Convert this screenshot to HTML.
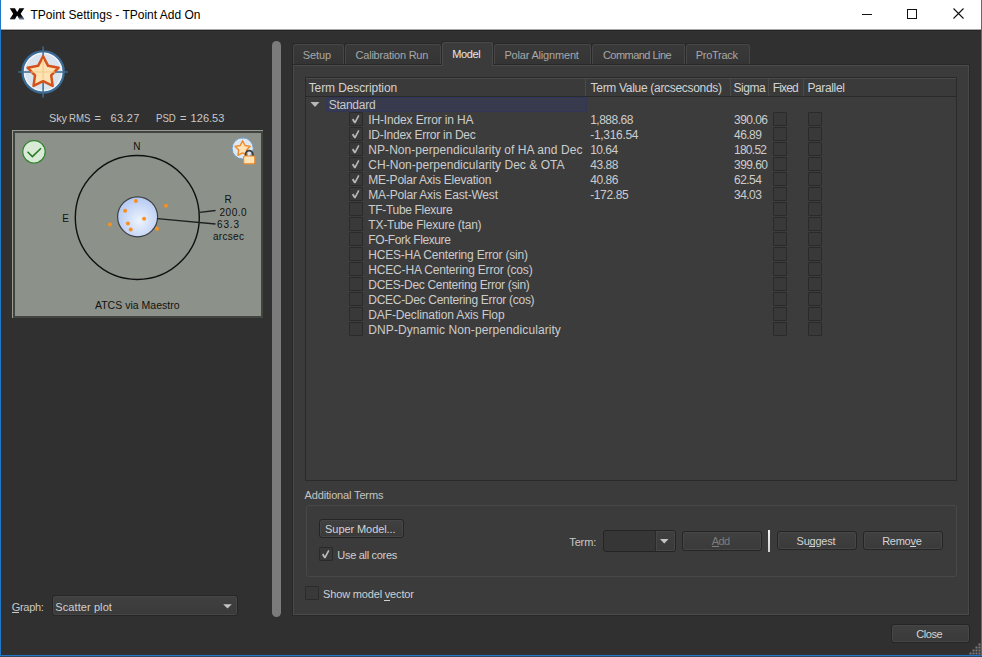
<!DOCTYPE html>
<html><head><meta charset="utf-8">
<style>
html,body{margin:0;padding:0}
body{width:982px;height:657px;position:relative;overflow:hidden;background:#303030;font-family:"Liberation Sans",sans-serif}
.a{position:absolute;box-sizing:border-box}
.t{position:absolute;white-space:pre;line-height:1;font-family:"Liberation Sans",sans-serif}
.cb{position:absolute;box-sizing:border-box;width:14px;height:14px;border:1px solid #2a2a2a;background:#393939;border-radius:1px}
.btn{position:absolute;box-sizing:border-box;border:1px solid #252525;border-radius:3px;background:linear-gradient(#404040,#3a3a3a);box-shadow:inset 0 0 0 1px #464646}
.tab{position:absolute;box-sizing:border-box;border:1px solid #464646;border-bottom:none;border-radius:3px 3px 0 0;background:linear-gradient(#393939,#343434);box-shadow:-1px -1px 0 #282828}
.chk{position:absolute;color:#d0d0d0;font-size:12px;line-height:1}
</style></head>
<body>
<!-- title bar -->
<div class="a" style="left:0;top:0;width:982px;height:29px;background:#ffffff"></div>
<div class="a" style="left:0;top:29px;width:982px;height:1px;background:#a8a8a8"></div>
<div class="a" style="left:0;top:30px;width:982px;height:1px;background:#242424"></div>
<svg class="a" style="left:0;top:0" width="982" height="29">
  <defs><linearGradient id="xg" x1="0" y1="0" x2="0" y2="1"><stop offset="0" stop-color="#000" stop-opacity="0"/><stop offset="1" stop-color="#90a6c8"/></linearGradient></defs>
  <path d="M9.8 8.3 L15 8.3 Q16 10.6 17.2 11.9 Q18.3 10.6 19.3 8.3 L24.3 8.3 Q22 11.8 20.7 13.8 Q22.3 16.4 24.3 19.3 L19.3 19.3 Q18.3 17 17.2 15.6 Q16 17 15 19.3 L9.8 19.3 Q11.6 16.4 13.2 13.8 Q11.8 11.8 9.8 8.3 Z" fill="#000"/>
  <path d="M18.6 14.8 L21.3 14.8 Q22.5 16.6 24.3 19.3 L19.3 19.3 Q18.6 17.2 17.6 15.8 Z" fill="url(#xg)"/>
  <path d="M11.2 17 L14.2 17 L15 19.3 L9.8 19.3 Z" fill="#2a3a6a" opacity="0.35"/>
  <rect x="862" y="14" width="10" height="1" fill="#111"/>
  <rect x="907.5" y="9.5" width="9" height="9" fill="none" stroke="#111" stroke-width="1"/>
  <path d="M953.5 8.5 L963.5 18.5 M963.5 8.5 L953.5 18.5" stroke="#111" stroke-width="1.1"/>
</svg>
<!-- window borders -->
<div class="a" style="left:0;top:0;width:1px;height:657px;background:#2079c8"></div>
<div class="a" style="left:981px;top:0;width:1px;height:657px;background:#2079c8"></div>
<div class="a" style="left:0;top:655px;width:982px;height:1px;background:#2079c8"></div>
<div class="a" style="left:0;top:656px;width:982px;height:1px;background:#34485c"></div>

<!-- left: star logo -->
<svg class="a" style="left:14px;top:44px" width="58" height="58" viewBox="0 0 58 58">
  <circle cx="29.1" cy="28" r="20.6" fill="#dae4ee" stroke="#3b6b94" stroke-width="2.3"/>
  <circle cx="29.1" cy="28" r="18.6" fill="none" stroke="#f2f7fb" stroke-width="1.2"/>
  <path d="M29.1 2.6 V53.4 M4.2 28 H53.8" stroke="#3b6b94" stroke-width="1.5"/>
  <path d="M29.10 12.40 L34.10 21.82 L44.60 23.66 L37.18 31.33 L38.68 41.89 L29.10 37.20 L19.52 41.89 L21.02 31.33 L13.60 23.66 L24.10 21.82 Z" fill="#fde2b4" stroke="#d4531c" stroke-width="2.5" stroke-linejoin="round"/>
  <path d="M29.1 15 V35.5 M17 28 H41" stroke="#f2c98c" stroke-width="1.2"/>
</svg>

<!-- plot panel -->
<div class="a" style="left:12px;top:130px;width:251px;height:188px;background:#41453f;border-left:1px solid #959a92;border-top:1px solid #959a92"></div>
<div class="a" style="left:15px;top:133px;width:246px;height:183px;background:#8c9289"></div>
<svg class="a" style="left:0;top:0" width="270" height="330">
  <defs>
    <radialGradient id="ig" cx="0.55" cy="0.6" r="0.6"><stop offset="0" stop-color="#eef4ff"/><stop offset="1" stop-color="#b4c8f2"/></radialGradient>
  </defs>
  <circle cx="137.3" cy="217.5" r="62" fill="none" stroke="#101010" stroke-width="1.4"/>
  <circle cx="137.6" cy="216.8" r="20" fill="url(#ig)" stroke="#3c3f44" stroke-width="1.2"/>
  <path d="M157.3 218.6 L215.5 224" stroke="#202020" stroke-width="1.3"/>
  <path d="M199.8 212.4 L215.5 210.5" stroke="#202020" stroke-width="1.3"/>
  <g fill="#f7901e">
    <circle cx="135.9" cy="200.9" r="2"/><circle cx="166" cy="205.7" r="2"/>
    <circle cx="125.1" cy="210.8" r="2"/><circle cx="144.1" cy="218.8" r="2"/>
    <circle cx="127.9" cy="223.5" r="2"/><circle cx="110" cy="224.4" r="2"/>
    <circle cx="130.7" cy="229.6" r="2"/><circle cx="157" cy="228.7" r="2"/>
  </g>
  <!-- check icon -->
  <circle cx="34" cy="151.8" r="11.2" fill="#d9ebd6" stroke="#2e832e" stroke-width="1.2"/>
  <path d="M27.5 151.8 L32.4 156.6 L41 148.2" fill="none" stroke="#237a23" stroke-width="1.5"/>
  <!-- small star + lock -->
  <circle cx="242.7" cy="148.4" r="10.6" fill="#dfe8f1" stroke="#6f9cc6" stroke-width="1"/>
  <path d="M242.7 136.8 V139" stroke="#6f9cc6" stroke-width="1"/>
  <path d="M242.60 140.80 L245.01 145.48 L250.21 146.33 L246.50 150.07 L247.30 155.27 L242.60 152.90 L237.90 155.27 L238.70 150.07 L234.99 146.33 L240.19 145.48 Z" fill="#fde3b6" stroke="#ec8a2c" stroke-width="1.4" stroke-linejoin="round"/>
  <path d="M245.6 156.5 V154.3 A3.6 3.6 0 0 1 252.8 154.3 V156.5" fill="none" stroke="#3e3e3e" stroke-width="1.8"/>
  <rect x="243.6" y="156" width="11.2" height="7.8" rx="1.3" fill="#fde3b6" stroke="#ec8a2c" stroke-width="1.2"/>
</svg>

<!-- graph combo -->
<div class="btn" style="left:52px;top:595px;width:186px;height:21px;border-color:#262626"></div>
<svg class="a" style="left:222px;top:603px" width="12" height="8"><path d="M1.2 1.2 H9.8 L5.5 5.6 Z" fill="#c4c4c4"/></svg>

<!-- splitter -->
<div class="a" style="left:272px;top:41px;width:9px;height:576px;background:#7b7b7b;border-radius:4.5px"></div>

<!-- tabs -->
<div class="tab" style="left:293px;top:44px;width:51px;height:21px"></div>
<div class="tab" style="left:345px;top:44px;width:96px;height:21px"></div>
<div class="tab" style="left:494px;top:44px;width:97px;height:21px"></div>
<div class="tab" style="left:592px;top:44px;width:93px;height:21px"></div>
<div class="tab" style="left:686px;top:44px;width:64px;height:21px"></div>

<!-- tab pane -->
<div class="a" style="left:292px;top:64px;width:678px;height:552px;background:#282828"></div>
<div class="a" style="left:293px;top:65px;width:676px;height:550px;background:#3b3b3b;border:1px solid #494949"></div>
<!-- selected tab -->
<div class="a" style="left:442px;top:42px;width:51px;height:24px;background:#3b3b3b;border:1px solid #4a4a4a;border-bottom:none;border-radius:3px 3px 0 0;box-shadow:-1px -1px 0 #282828"></div>

<!-- tree -->
<div class="a" style="left:305px;top:77px;width:652px;height:404px;background:#3c3c3c;border:1px solid #2a2a2a"></div>
<div class="a" style="left:306px;top:78px;width:650px;height:18px;background:#3a3a3a;border-top:1px solid #4b4b4b"></div>
<div class="a" style="left:306px;top:96px;width:650px;height:1px;background:#2a2a2a"></div>
<div class="a" style="left:585px;top:79px;width:1px;height:17px;background:#4a4a4a"></div>
<div class="a" style="left:730px;top:79px;width:1px;height:17px;background:#4a4a4a"></div>
<div class="a" style="left:768px;top:79px;width:1px;height:17px;background:#4a4a4a"></div>
<div class="a" style="left:803px;top:79px;width:1px;height:17px;background:#4a4a4a"></div>
<!-- selected row -->
<div class="a" style="left:326px;top:97px;width:261px;height:15px;background:#383a4e;border:1px solid #32355a;border-radius:2px"></div>
<svg class="a" style="left:309px;top:100px" width="12" height="9"><path d="M1.5 2 H10.5 L6 7 Z" fill="#b8b8b8"/></svg>

<!-- checkboxes -->
<div id="cbs"></div>
<div class="cb" style="left:349px;top:112px"></div>
<div class="cb" style="left:349px;top:127px"></div>
<div class="cb" style="left:349px;top:142px"></div>
<div class="cb" style="left:349px;top:157px"></div>
<div class="cb" style="left:349px;top:172px"></div>
<div class="cb" style="left:349px;top:187px"></div>
<div class="cb" style="left:349px;top:202px"></div>
<div class="cb" style="left:349px;top:217px"></div>
<div class="cb" style="left:349px;top:232px"></div>
<div class="cb" style="left:349px;top:247px"></div>
<div class="cb" style="left:349px;top:262px"></div>
<div class="cb" style="left:349px;top:277px"></div>
<div class="cb" style="left:349px;top:292px"></div>
<div class="cb" style="left:349px;top:307px"></div>
<div class="cb" style="left:349px;top:322px"></div>
<svg class="a" style="left:349px;top:112px" width="14" height="100">
  <g fill="#b8b8b8">
    <path transform="translate(0,0)" d="M2.9 7.7 L4.4 6.6 L5.9 9.1 L9.1 3.1 L10.5 3.7 L6.6 11.3 L5.2 11.3 Z"/>
    <path transform="translate(0,15)" d="M2.9 7.7 L4.4 6.6 L5.9 9.1 L9.1 3.1 L10.5 3.7 L6.6 11.3 L5.2 11.3 Z"/>
    <path transform="translate(0,30)" d="M2.9 7.7 L4.4 6.6 L5.9 9.1 L9.1 3.1 L10.5 3.7 L6.6 11.3 L5.2 11.3 Z"/>
    <path transform="translate(0,45)" d="M2.9 7.7 L4.4 6.6 L5.9 9.1 L9.1 3.1 L10.5 3.7 L6.6 11.3 L5.2 11.3 Z"/>
    <path transform="translate(0,60)" d="M2.9 7.7 L4.4 6.6 L5.9 9.1 L9.1 3.1 L10.5 3.7 L6.6 11.3 L5.2 11.3 Z"/>
    <path transform="translate(0,75)" d="M2.9 7.7 L4.4 6.6 L5.9 9.1 L9.1 3.1 L10.5 3.7 L6.6 11.3 L5.2 11.3 Z"/>
</g>
</svg>
<!-- fixed / parallel checkboxes -->
<div class="cb" style="left:773px;top:112px"></div><div class="cb" style="left:808px;top:112px"></div>
<div class="cb" style="left:773px;top:127px"></div><div class="cb" style="left:808px;top:127px"></div>
<div class="cb" style="left:773px;top:142px"></div><div class="cb" style="left:808px;top:142px"></div>
<div class="cb" style="left:773px;top:157px"></div><div class="cb" style="left:808px;top:157px"></div>
<div class="cb" style="left:773px;top:172px"></div><div class="cb" style="left:808px;top:172px"></div>
<div class="cb" style="left:773px;top:187px"></div><div class="cb" style="left:808px;top:187px"></div>
<div class="cb" style="left:773px;top:202px"></div><div class="cb" style="left:808px;top:202px"></div>
<div class="cb" style="left:773px;top:217px"></div><div class="cb" style="left:808px;top:217px"></div>
<div class="cb" style="left:773px;top:232px"></div><div class="cb" style="left:808px;top:232px"></div>
<div class="cb" style="left:773px;top:247px"></div><div class="cb" style="left:808px;top:247px"></div>
<div class="cb" style="left:773px;top:262px"></div><div class="cb" style="left:808px;top:262px"></div>
<div class="cb" style="left:773px;top:277px"></div><div class="cb" style="left:808px;top:277px"></div>
<div class="cb" style="left:773px;top:292px"></div><div class="cb" style="left:808px;top:292px"></div>
<div class="cb" style="left:773px;top:307px"></div><div class="cb" style="left:808px;top:307px"></div>
<div class="cb" style="left:773px;top:322px"></div><div class="cb" style="left:808px;top:322px"></div>

<!-- additional terms group -->
<div class="a" style="left:306px;top:505px;width:651px;height:72px;border:1px solid #484848;border-radius:3px"></div>
<div class="btn" style="left:319px;top:519px;width:85px;height:19px"></div>
<div class="cb" style="left:319px;top:547px"></div>
<svg class="a" style="left:319px;top:547px" width="14" height="14"><path d="M2.9 7.7 L4.4 6.6 L5.9 9.1 L9.1 3.1 L10.5 3.7 L6.6 11.3 L5.2 11.3 Z" fill="#bcbcbc"/></svg>
<!-- term combo -->
<div class="a" style="left:603px;top:530px;width:73px;height:22px;border:1px solid #242424;border-radius:3px;background:#363636;overflow:hidden">
  <div class="a" style="left:51px;top:0;width:20px;height:20px;background:linear-gradient(#3f3f3f,#3a3a3a);border-left:1px solid #2a2a2a;box-shadow:inset 0 0 0 1px #464646;border-radius:0 2px 2px 0"></div>
</div>
<svg class="a" style="left:658px;top:537px" width="12" height="9"><path d="M2 2 H10.5 L6.25 6.6 Z" fill="#c4c4c4"/></svg>
<div class="btn" style="left:682px;top:531px;width:80px;height:20px"></div>
<div class="a" style="left:768px;top:530px;width:2px;height:22px;background:linear-gradient(#f4f4f4,#d0d0d0)"></div>
<div class="btn" style="left:777px;top:531px;width:80px;height:19px"></div>
<div class="btn" style="left:863px;top:531px;width:80px;height:19px"></div>
<!-- underlines -->
<div class="a" style="left:712px;top:546px;width:7px;height:1px;background:#7c7c7c"></div>
<div class="a" style="left:809px;top:546px;width:6px;height:1px;background:#d4d4d4"></div>
<div class="a" style="left:910px;top:546px;width:6px;height:1px;background:#d4d4d4"></div>
<div class="a" style="left:12px;top:612px;width:7px;height:1px;background:#c8c8c8"></div>
<div class="a" style="left:384px;top:600px;width:6px;height:1px;background:#d0d0d0"></div>
<!-- show model vector -->
<div class="cb" style="left:305px;top:586px"></div>

<!-- close button -->
<div class="btn" style="left:891px;top:624px;width:79px;height:19px"></div>
<!-- size grip -->
<svg class="a" style="left:966px;top:640px" width="16" height="16">
  <g fill="#7a7a7a">
    <rect x="12.5" y="3.5" width="2" height="2"/>
    <rect x="9.5" y="6.5" width="2" height="2"/><rect x="12.5" y="6.5" width="2" height="2"/>
    <rect x="6.5" y="9.5" width="2" height="2"/><rect x="9.5" y="9.5" width="2" height="2"/><rect x="12.5" y="9.5" width="2" height="2"/>
    <rect x="3.5" y="12.5" width="2" height="2"/><rect x="6.5" y="12.5" width="2" height="2"/><rect x="9.5" y="12.5" width="2" height="2"/><rect x="12.5" y="12.5" width="2" height="2"/>
  </g>
</svg>

<div class="t" style="left:30.5px;top:9.0px;font-size:12px;color:#000000;letter-spacing:0.004px;">TPoint Settings - TPoint Add On</div>
<div class="t" style="left:49.0px;top:113.0px;font-size:11px;color:#c8c8c8;letter-spacing:-0.172px;">Sky</div>
<div class="t" style="left:69.2px;top:113.0px;font-size:11px;color:#c8c8c8;transform:scaleX(0.8751);transform-origin:0 0;">RMS</div>
<div class="t" style="left:94.5px;top:113.0px;font-size:11px;color:#c8c8c8;letter-spacing:0.000px;">=</div>
<div class="t" style="left:110.5px;top:113.0px;font-size:11px;color:#c8c8c8;letter-spacing:0.317px;">63.27</div>
<div class="t" style="left:155.5px;top:113.0px;font-size:11px;color:#c8c8c8;transform:scaleX(0.8751);transform-origin:0 0;">PSD</div>
<div class="t" style="left:180.0px;top:113.0px;font-size:11px;color:#c8c8c8;letter-spacing:0.000px;">=</div>
<div class="t" style="left:190.6px;top:113.0px;font-size:11px;color:#c8c8c8;letter-spacing:0.029px;">126.53</div>
<div class="t" style="left:11.7px;top:602.0px;font-size:11px;color:#c8c8c8;letter-spacing:-0.288px;">Graph:</div>
<div class="t" style="left:55.3px;top:602.0px;font-size:11px;color:#d0d0d0;letter-spacing:0.087px;">Scatter plot</div>
<div class="t" style="left:302.7px;top:50.0px;font-size:11px;color:#a8a8a8;letter-spacing:-0.062px;">Setup</div>
<div class="t" style="left:355.5px;top:50.0px;font-size:11px;color:#a8a8a8;letter-spacing:-0.209px;">Calibration Run</div>
<div class="t" style="left:452.2px;top:49.0px;font-size:11px;color:#e8e8e8;letter-spacing:-0.392px;">Model</div>
<div class="t" style="left:504.4px;top:50.0px;font-size:11px;color:#a8a8a8;letter-spacing:-0.182px;">Polar Alignment</div>
<div class="t" style="left:602.9px;top:50.0px;font-size:11px;color:#a8a8a8;letter-spacing:-0.536px;">Command Line</div>
<div class="t" style="left:695.8px;top:50.0px;font-size:11px;color:#a8a8a8;letter-spacing:-0.288px;">ProTrack</div>
<div class="t" style="left:308.7px;top:82.0px;font-size:12px;color:#d2d2d2;letter-spacing:-0.102px;">Term Description</div>
<div class="t" style="left:590.6px;top:82.0px;font-size:12px;color:#d2d2d2;letter-spacing:-0.309px;">Term Value (arcsecsonds)</div>
<div class="t" style="left:733.4px;top:82.0px;font-size:12px;color:#d2d2d2;letter-spacing:-0.404px;">Sigma</div>
<div class="t" style="left:772.7px;top:82.0px;font-size:12px;color:#d2d2d2;letter-spacing:-0.836px;">Fixed</div>
<div class="t" style="left:807.4px;top:82.0px;font-size:12px;color:#d2d2d2;letter-spacing:-0.362px;">Parallel</div>
<div class="t" style="left:328.7px;top:99.0px;font-size:12px;color:#c8c8c8;letter-spacing:-0.258px;">Standard</div>
<div class="t" style="left:368.3px;top:114.0px;font-size:12px;color:#cccccc;letter-spacing:-0.149px;">IH-Index Error in HA</div>
<div class="t" style="left:590.2px;top:114.0px;font-size:12px;color:#cccccc;letter-spacing:-0.503px;">1,888.68</div>
<div class="t" style="left:734.0px;top:114.0px;font-size:12px;color:#cccccc;letter-spacing:-0.541px;">390.06</div>
<div class="t" style="left:368.3px;top:129.0px;font-size:12px;color:#cccccc;letter-spacing:-0.265px;">ID-Index Error in Dec</div>
<div class="t" style="left:590.2px;top:129.0px;font-size:12px;color:#cccccc;letter-spacing:-0.302px;">-1,316.54</div>
<div class="t" style="left:734.0px;top:129.0px;font-size:12px;color:#cccccc;letter-spacing:-0.533px;">46.89</div>
<div class="t" style="left:368.3px;top:144.0px;font-size:12px;color:#cccccc;letter-spacing:0.055px;">NP-Non-perpendicularity of HA and Dec</div>
<div class="t" style="left:590.2px;top:144.0px;font-size:12px;color:#cccccc;letter-spacing:-0.533px;">10.64</div>
<div class="t" style="left:734.0px;top:144.0px;font-size:12px;color:#cccccc;letter-spacing:-0.741px;">180.52</div>
<div class="t" style="left:368.3px;top:159.0px;font-size:12px;color:#cccccc;letter-spacing:0.032px;">CH-Non-perpendicularity Dec &amp; OTA</div>
<div class="t" style="left:590.2px;top:159.0px;font-size:12px;color:#cccccc;letter-spacing:-0.433px;">43.88</div>
<div class="t" style="left:734.0px;top:159.0px;font-size:12px;color:#cccccc;letter-spacing:-0.541px;">399.60</div>
<div class="t" style="left:368.3px;top:174.0px;font-size:12px;color:#cccccc;letter-spacing:-0.226px;">ME-Polar Axis Elevation</div>
<div class="t" style="left:590.2px;top:174.0px;font-size:12px;color:#cccccc;letter-spacing:-0.433px;">40.86</div>
<div class="t" style="left:734.0px;top:174.0px;font-size:12px;color:#cccccc;letter-spacing:-0.533px;">62.54</div>
<div class="t" style="left:368.3px;top:189.0px;font-size:12px;color:#cccccc;letter-spacing:-0.187px;">MA-Polar Axis East-West</div>
<div class="t" style="left:590.2px;top:189.0px;font-size:12px;color:#cccccc;letter-spacing:-0.367px;">-172.85</div>
<div class="t" style="left:734.0px;top:189.0px;font-size:12px;color:#cccccc;letter-spacing:-0.533px;">34.03</div>
<div class="t" style="left:368.3px;top:204.0px;font-size:12px;color:#cccccc;letter-spacing:-0.323px;">TF-Tube Flexure</div>
<div class="t" style="left:368.3px;top:219.0px;font-size:12px;color:#cccccc;letter-spacing:-0.215px;">TX-Tube Flexure (tan)</div>
<div class="t" style="left:368.3px;top:234.0px;font-size:12px;color:#cccccc;letter-spacing:-0.387px;">FO-Fork Flexure</div>
<div class="t" style="left:368.3px;top:249.0px;font-size:12px;color:#cccccc;letter-spacing:-0.203px;">HCES-HA Centering Error (sin)</div>
<div class="t" style="left:368.3px;top:264.0px;font-size:12px;color:#cccccc;letter-spacing:-0.178px;">HCEC-HA Centering Error (cos)</div>
<div class="t" style="left:368.3px;top:279.0px;font-size:12px;color:#cccccc;letter-spacing:-0.318px;">DCES-Dec Centering Error (sin)</div>
<div class="t" style="left:368.3px;top:294.0px;font-size:12px;color:#cccccc;letter-spacing:-0.290px;">DCEC-Dec Centering Error (cos)</div>
<div class="t" style="left:368.3px;top:309.0px;font-size:12px;color:#cccccc;letter-spacing:-0.129px;">DAF-Declination Axis Flop</div>
<div class="t" style="left:368.3px;top:324.0px;font-size:12px;color:#cccccc;letter-spacing:0.081px;">DNP-Dynamic Non-perpendicularity</div>
<div class="t" style="left:304.5px;top:490.0px;font-size:11px;color:#c4c4c4;letter-spacing:-0.148px;">Additional Terms</div>
<div class="t" style="left:325.1px;top:524.0px;font-size:11px;color:#d4d4d4;letter-spacing:-0.081px;">Super Model...</div>
<div class="t" style="left:337.3px;top:550.0px;font-size:11px;color:#d0d0d0;letter-spacing:-0.307px;">Use all cores</div>
<div class="t" style="left:569.3px;top:537.0px;font-size:11px;color:#c8c8c8;letter-spacing:-0.150px;">Term:</div>
<div class="t" style="left:711.8px;top:536.0px;font-size:11px;color:#7c7c7c;letter-spacing:-0.589px;">Add</div>
<div class="t" style="left:796.6px;top:536.0px;font-size:11px;color:#d4d4d4;letter-spacing:-0.229px;">Suggest</div>
<div class="t" style="left:882.2px;top:536.0px;font-size:11px;color:#d4d4d4;letter-spacing:-0.274px;">Remove</div>
<div class="t" style="left:323.1px;top:589.0px;font-size:11px;color:#d0d0d0;letter-spacing:-0.172px;">Show model vector</div>
<div class="t" style="left:916.3px;top:629.0px;font-size:11px;color:#d4d4d4;letter-spacing:-0.456px;">Close</div>
<div class="t" style="left:133.2px;top:141.5px;font-size:10px;color:#111111;letter-spacing:0.000px;">N</div>
<div class="t" style="left:62.3px;top:214.0px;font-size:10px;color:#111111;letter-spacing:0.000px;">E</div>
<div class="t" style="left:224.5px;top:195.0px;font-size:10px;color:#111111;letter-spacing:0.000px;">R</div>
<div class="t" style="left:219.5px;top:208.0px;font-size:10px;color:#111111;letter-spacing:0.517px;">200.0</div>
<div class="t" style="left:217.0px;top:220.0px;font-size:10px;color:#111111;letter-spacing:0.844px;">63.3</div>
<div class="t" style="left:213.0px;top:232.0px;font-size:10px;color:#111111;letter-spacing:0.289px;">arcsec</div>
<div class="t" style="left:94.9px;top:300.0px;font-size:10.5px;color:#111111;letter-spacing:0.019px;">ATCS via Maestro</div>
</body></html>
